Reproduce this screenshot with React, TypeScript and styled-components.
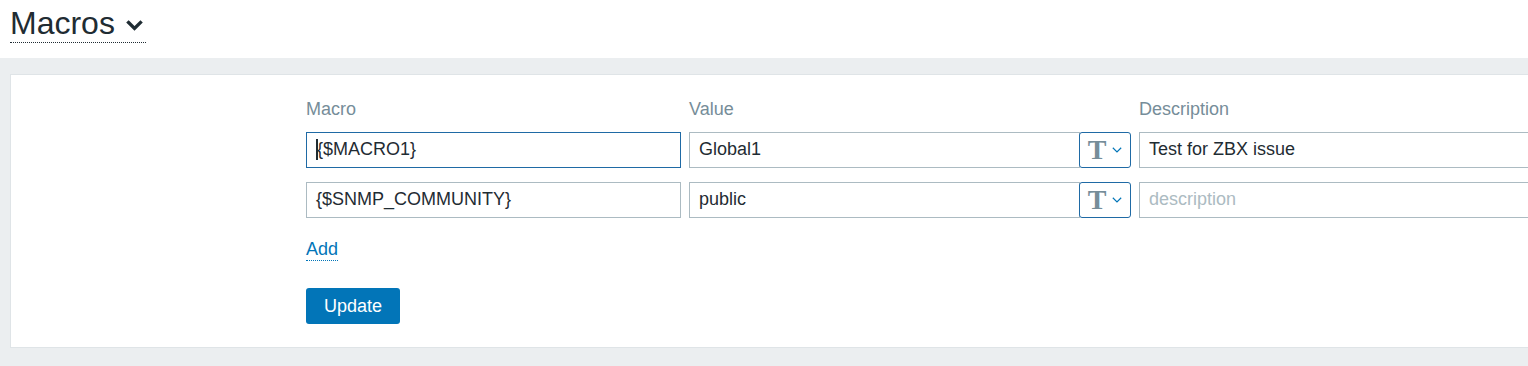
import React from "react";
import styled, { createGlobalStyle } from "styled-components";

const GlobalStyle = createGlobalStyle`
  html, body {
    margin: 0;
    padding: 0;
    background: #ebeef0;
    overflow: hidden;
  }
  body {
    font-family: "Liberation Sans", Arial, sans-serif;
    color: #1f2c33;
  }
  * {
    box-sizing: border-box;
  }
`;

const macros = [
  { macro: "{$MACRO1}", value: "Global1", description: "Test for ZBX issue", focused: true },
  { macro: "{$SNMP_COMMUNITY}", value: "public", description: "", focused: false },
];

const ChevronDown = ({ size, stroke, width }: { size: number; stroke: string; width: number }) => (
  <svg width={size} height={size} viewBox="0 0 16 16" fill="none">
    <path d="M3 5.5 L8 10.5 L13 5.5" stroke={stroke} strokeWidth={width} strokeLinecap="square" />
  </svg>
);

export default function App() {
  return (
    <>
      <GlobalStyle />
      <Header>
        <Title>
          Macros
          <TitleChevron>
            <ChevronDown size={19} stroke="#1f2c33" width={2.8} />
          </TitleChevron>
        </Title>
      </Header>
      <Main>
        <Panel>
          <MacroTable>
            <HeadCell>Macro</HeadCell>
            <HeadCell>Value</HeadCell>
            <HeadCell>Description</HeadCell>
            {macros.map((m) => (
              <React.Fragment key={m.macro}>
                <Field $focused={m.focused}>
                  {m.focused && <Caret />}
                  {m.macro}
                </Field>
                <ValueGroup>
                  <Field>{m.value}</Field>
                  <TypeButton>
                    <TypeGlyph>T</TypeGlyph>
                    <ChevronDown size={12} stroke="#0275b8" width={1.6} />
                  </TypeButton>
                </ValueGroup>
                <Field $placeholder={!m.description}>{m.description || "description"}</Field>
              </React.Fragment>
            ))}
          </MacroTable>
          <AddRow>
            <AddLink>Add</AddLink>
          </AddRow>
          <UpdateButton>Update</UpdateButton>
        </Panel>
      </Main>
    </>
  );
}

const Header = styled.div`
  background: #ffffff;
  height: 58px;
  padding: 5px 0 0 10px;
`;

const Title = styled.h1`
  display: inline-flex;
  align-items: center;
  margin: 0;
  font-size: 32px;
  font-weight: 400;
  line-height: 37px;
  color: #1f2c33;
  border-bottom: 1px dotted #1f2c33;
`;

const TitleChevron = styled.span`
  display: inline-flex;
  margin: 4px 2px 0 10px;
`;

const Main = styled.div`
  padding: 16px 0 0 10px;
`;

const Panel = styled.div`
  width: 1700px;
  background: #ffffff;
  border: 1px solid #dfe4e7;
  padding: 26px 0 23px 295px;
`;

const MacroTable = styled.div`
  display: grid;
  grid-template-columns: 375px 442px 450px;
  column-gap: 8px;
  row-gap: 14px;
`;

const HeadCell = styled.div`
  font-size: 18px;
  line-height: 17px;
  color: #768d99;
`;

const Field = styled.div<{ $focused?: boolean; $placeholder?: boolean }>`
  display: flex;
  align-items: center;
  flex: 1;
  height: 36px;
  padding: 0 9px 2px;
  font-size: 18px;
  color: ${(p) => (p.$placeholder ? "#acbbc2" : "#1f2c33")};
  background: #ffffff;
  border: 1px solid ${(p) => (p.$focused ? "#1f6aa5" : "#acbbc2")};
  white-space: nowrap;
`;

const Caret = styled.span`
  width: 2px;
  height: 21px;
  margin-right: -1px;
  background: #1f2c33;
`;

const ValueGroup = styled.div`
  display: flex;
`;

const TypeButton = styled.div`
  display: flex;
  align-items: center;
  justify-content: center;
  gap: 5px;
  width: 52px;
  height: 36px;
  margin-left: -1px;
  background: #ffffff;
  border: 1px solid #1f6aa5;
  border-radius: 3px;
  padding-left: 1px;
`;

const TypeGlyph = styled.span`
  font-family: "Liberation Serif", "Times New Roman", serif;
  font-weight: 700;
  font-size: 28px;
  line-height: 1;
  color: #768d99;
`;

const AddRow = styled.div`
  margin-top: 20px;
`;

const AddLink = styled.span`
  font-size: 18px;
  line-height: 22px;
  color: #0275b8;
  border-bottom: 1px dotted #0275b8;
  display: inline-block;
`;

const UpdateButton = styled.button`
  display: block;
  margin-top: 27px;
  width: 94px;
  height: 36px;
  padding: 0;
  font-family: "Liberation Sans", Arial, sans-serif;
  font-size: 18px;
  color: #ffffff;
  background: #0275b8;
  border: none;
  border-radius: 3px;
`;
